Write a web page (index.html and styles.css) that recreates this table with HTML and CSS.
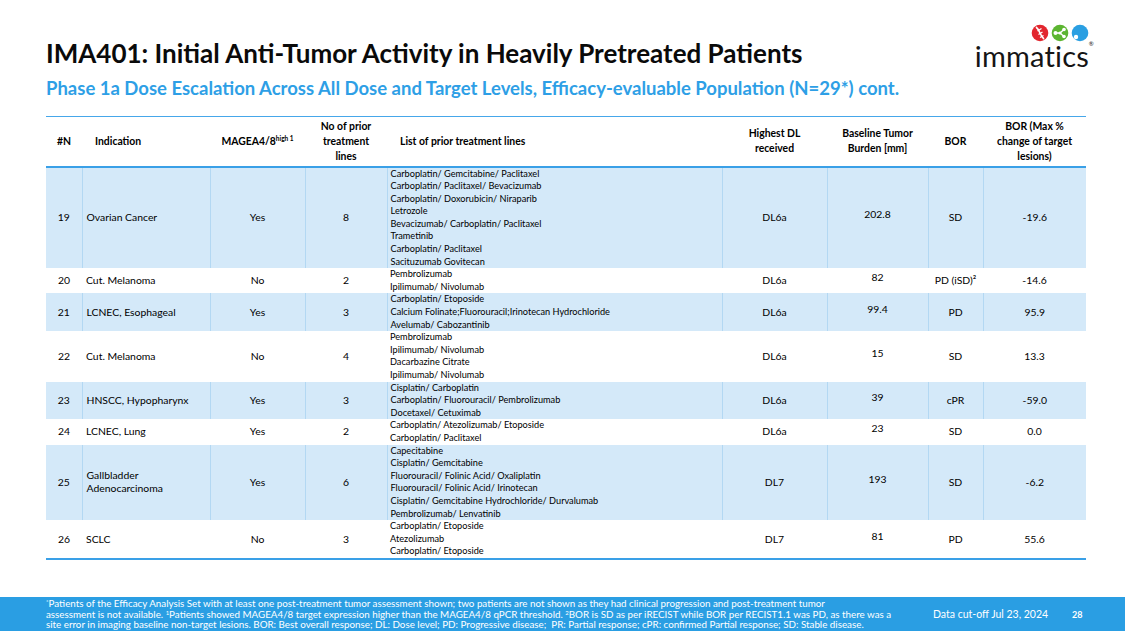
FILE: index.html
```html
<!DOCTYPE html>
<html lang="en">
<head>
<meta charset="utf-8">
<title>IMA401: Initial Anti-Tumor Activity</title>
<link rel="stylesheet" href="styles.css">
</head>
<body>
<div class="slide">
  <header class="top">
    <div class="titles">
      <h1 class="title">IMA401: Initial Anti-Tumor Activity in Heavily Pretreated Patients</h1>
      <h2 class="subtitle">Phase 1a Dose Escalation Across All Dose and Target Levels, Efficacy-evaluable Population (N=29*) cont.</h2>
    </div>
    <div class="logo">
      <svg class="logo-dots" width="58" height="18" viewBox="0 0 58 18">
        <circle cx="9" cy="9" r="8.3" fill="#e2262e"/>
        <path d="M5 3 C9 6 9 12 13 15" stroke="#fff" stroke-width="1.6" fill="none"/>
        <path d="M6.5 7 L10.5 4.5 M7.5 10.5 L11.5 8 M9 13.5 L12.5 11.5" stroke="#fff" stroke-width="1.3" fill="none"/>
        <circle cx="29" cy="9" r="8.3" fill="#5cb531"/>
        <path d="M24.5 9 L29 9 M29 9 L33 5.5 M29 9 L33 12.5" stroke="#fff" stroke-width="1.4" fill="none"/>
        <circle cx="24.5" cy="9" r="2" fill="#fff"/>
        <circle cx="29" cy="9" r="1.6" fill="#fff"/>
        <circle cx="33" cy="5.5" r="1.8" fill="#fff"/>
        <circle cx="33" cy="12.5" r="1.8" fill="#fff"/>
        <circle cx="49" cy="9" r="8.3" fill="#2a9fe2"/>
        <circle cx="45" cy="13" r="2.2" fill="#fff"/>
      </svg>
      <div class="logo-word">immatics<span class="reg">®</span></div>
    </div>
  </header>

  <table class="data">
    <colgroup>
      <col class="w-n"><col class="w-ind"><col class="w-mag"><col class="w-no"><col class="w-list"><col class="w-dl"><col class="w-base"><col class="w-bor"><col class="w-pct">
    </colgroup>
    <thead>
      <tr>
        <th>#N</th>
        <th class="th-left">Indication</th>
        <th>MAGEA4/8<sup>high 1</sup></th>
        <th>No of prior<br>treatment<br>lines</th>
        <th class="th-left">List of prior treatment lines</th>
        <th>Highest DL<br>received</th>
        <th>Baseline Tumor<br>Burden [mm]</th>
        <th>BOR</th>
        <th>BOR (Max %<br>change of target<br>lesions)</th>
      </tr>
    </thead>
    <tbody>
      <tr class="shade">
        <td>19</td><td class="ind">Ovarian Cancer</td><td>Yes</td><td>8</td>
        <td class="list">Carboplatin/ Gemcitabine/ Paclitaxel<br>Carboplatin/ Paclitaxel/ Bevacizumab<br>Carboplatin/ Doxorubicin/ Niraparib<br>Letrozole<br>Bevacizumab/ Carboplatin/ Paclitaxel<br>Trametinib<br>Carboplatin/ Paclitaxel<br>Sacituzumab Govitecan</td>
        <td>DL6a</td><td class="base">202.8</td><td>SD</td><td>-19.6</td>
      </tr>
      <tr>
        <td>20</td><td class="ind">Cut. Melanoma</td><td>No</td><td>2</td>
        <td class="list">Pembrolizumab<br>Ipilimumab/ Nivolumab</td>
        <td>DL6a</td><td class="base">82</td><td>PD (iSD)²</td><td>-14.6</td>
      </tr>
      <tr class="shade">
        <td>21</td><td class="ind">LCNEC, Esophageal</td><td>Yes</td><td>3</td>
        <td class="list">Carboplatin/ Etoposide<br>Calcium Folinate;Fluorouracil;Irinotecan Hydrochloride<br>Avelumab/ Cabozantinib</td>
        <td>DL6a</td><td class="base">99.4</td><td>PD</td><td>95.9</td>
      </tr>
      <tr>
        <td>22</td><td class="ind">Cut. Melanoma</td><td>No</td><td>4</td>
        <td class="list">Pembrolizumab<br>Ipilimumab/ Nivolumab<br>Dacarbazine Citrate<br>Ipilimumab/ Nivolumab</td>
        <td>DL6a</td><td class="base">15</td><td>SD</td><td>13.3</td>
      </tr>
      <tr class="shade">
        <td>23</td><td class="ind">HNSCC, Hypopharynx</td><td>Yes</td><td>3</td>
        <td class="list">Cisplatin/ Carboplatin<br>Carboplatin/ Fluorouracil/ Pembrolizumab<br>Docetaxel/ Cetuximab</td>
        <td>DL6a</td><td class="base">39</td><td>cPR</td><td>-59.0</td>
      </tr>
      <tr>
        <td>24</td><td class="ind">LCNEC, Lung</td><td>Yes</td><td>2</td>
        <td class="list">Carboplatin/ Atezolizumab/ Etoposide<br>Carboplatin/ Paclitaxel</td>
        <td>DL6a</td><td class="base">23</td><td>SD</td><td>0.0</td>
      </tr>
      <tr class="shade">
        <td>25</td><td class="ind">Gallbladder<br>Adenocarcinoma</td><td>Yes</td><td>6</td>
        <td class="list">Capecitabine<br>Cisplatin/ Gemcitabine<br>Fluorouracil/ Folinic Acid/ Oxaliplatin<br>Fluorouracil/ Folinic Acid/ Irinotecan<br>Cisplatin/ Gemcitabine Hydrochloride/ Durvalumab<br>Pembrolizumab/ Lenvatinib</td>
        <td>DL7</td><td class="base">193</td><td>SD</td><td>-6.2</td>
      </tr>
      <tr class="last">
        <td>26</td><td class="ind">SCLC</td><td>No</td><td>3</td>
        <td class="list">Carboplatin/ Etoposide<br>Atezolizumab<br>Carboplatin/ Etoposide</td>
        <td>DL7</td><td class="base">81</td><td>PD</td><td>55.6</td>
      </tr>
    </tbody>
  </table>

  <footer class="foot">
    <p class="notes"><sup>*</sup>Patients of the Efficacy Analysis Set with at least one post-treatment tumor assessment shown; two patients are not shown as they had clinical progression and post-treatment tumor<br>assessment is not available. <sup>1</sup>Patients showed MAGEA4/8 target expression higher than the MAGEA4/8 qPCR threshold. <sup>2</sup>BOR is SD as per iRECIST while BOR per RECIST1.1 was PD, as there was a<br>site error in imaging baseline non-target lesions. BOR: Best overall response; DL: Dose level; PD: Progressive disease;&nbsp; PR: Partial response; cPR: confirmed Partial response; SD: Stable disease.</p>
    <div class="cutoff">Data cut-off Jul 23, 2024</div>
    <div class="page">28</div>
  </footer>
</div>
</body>
</html>
```

FILE: styles.css
```css
* { box-sizing: border-box; }
html, body { margin: 0; padding: 0; background: #fff; }
body { font-family: "Lato", "Carlito", "Liberation Sans", sans-serif; color: #000; }

.slide {
  width: 1125px;
  height: 631px;
  display: flex;
  flex-direction: column;
  overflow: hidden;
}

.top {
  display: flex;
  justify-content: space-between;
  align-items: flex-start;
  padding: 38px 36px 0 46px;
}
.title {
  margin: 0;
  font-size: 26px;
  line-height: 30px;
  font-weight: 700;
  color: #0a0a0a;
}
.subtitle {
  margin: 9px 0 0 0;
  font-size: 18.5px;
  line-height: 22px;
  font-weight: 700;
  color: #2e9fe6;
}

.logo {
  display: flex;
  flex-direction: column;
  align-items: flex-end;
  margin-top: -14px;
}
.logo-dots { display: block; }
.logo-word {
  font-family: "Lato", sans-serif;
  font-size: 29px;
  line-height: 26px;
  font-weight: 400;
  color: #151515;
  letter-spacing: 0.2px;
  position: relative;
  margin-top: 1px;
}
.reg {
  position: absolute;
  font-size: 6px;
  line-height: 6px;
  top: -2px;
  right: -5px;
}

.data {
  margin: 17px 0 0 46px;
  width: 1040px;
  border-collapse: collapse;
  table-layout: fixed;
  font-size: 10.4px;
}
.w-n { width: 36px; }
.w-ind { width: 128px; }
.w-mag { width: 95px; }
.w-no { width: 82px; }
.w-list { width: 335px; }
.w-dl { width: 105px; }
.w-base { width: 101px; }
.w-bor { width: 55px; }
.w-pct { width: 103px; }

.data thead tr {
  height: 50px;
  border-top: 1.5px solid #46a7ea;
  border-bottom: 2px solid #3aa0e7;
}
.data th {
  font-size: 10.4px;
  line-height: 15px;
  font-weight: 700;
  text-align: center;
  vertical-align: middle;
  padding: 0 2px;
}
.data th sup { font-size: 6.5px; vertical-align: 4px; line-height: 0; }
.data th.th-left { text-align: left; padding-left: 13px; }

.data td {
  text-align: center;
  vertical-align: middle;
  padding: 0 2px;
  line-height: 13px;
}
.data td.ind { text-align: left; padding-left: 4px; }
.data td.list {
  text-align: left;
  font-size: 9.2px;
  line-height: 12.6px;
  padding: 0 0 0 3px;
  white-space: nowrap;
}
.data td.base { padding-bottom: 6px; }

.data tr.shade { background: #d4e9f9; }
.data tr.shade td + td { border-left: 1px solid #b3d8f3; }
.data tr.last { border-bottom: 2px solid #3aa0e7; }

.foot {
  margin-top: auto;
  height: 34px;
  background: #2a9ee3;
  color: #fff;
  display: flex;
  align-items: center;
  padding: 0 0 0 46px;
}
.notes {
  margin: 0;
  font-size: 9.8px;
  line-height: 10.5px;
  white-space: nowrap;
  width: 887px;
  overflow: hidden;
}
.notes sup { font-size: 6px; vertical-align: 3px; line-height: 0; }
.cutoff {
  font-size: 10.5px;
  width: 139px;
}
.page {
  font-size: 9px;
  font-weight: 700;
}
```
